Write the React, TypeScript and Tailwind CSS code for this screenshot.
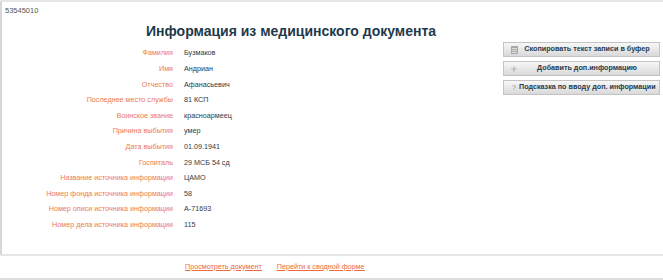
import { Plus } from 'lucide-react'

const ROWS: [string, string][] = [
  ['Фамилия', 'Бузмаков'],
  ['Имя', 'Андриан'],
  ['Отчество', 'Афанасьевич'],
  ['Последнее место службы', '81 КСП'],
  ['Воинское звание', 'красноармеец'],
  ['Причина выбытия', 'умер'],
  ['Дата выбытия', '01.09.1941'],
  ['Госпиталь', '29 МСБ 54 сд'],
  ['Название источника информации', 'ЦАМО'],
  ['Номер фонда источника информации', '58'],
  ['Номер описи источника информации', 'А-71693'],
  ['Номер дела источника информации', '115'],
]

function ActionButton({ icon, label }: { icon: React.ReactNode; label: string }) {
  return (
    <button
      type="button"
      className="flex h-[15px] w-[157px] items-center border border-[#c4c4c4] bg-gradient-to-b from-[#f7f7f7] to-[#d9d9d9] pl-[5px] pr-1 text-[7.2px] font-bold text-[#1f3b4d]"
    >
      <span className="flex w-[10px] shrink-0 items-center justify-center text-[#9a9a9a]">{icon}</span>
      <span className="flex-1 whitespace-nowrap text-center">{label}</span>
    </button>
  )
}

export default function App() {
  return (
    <div className="h-[280px] w-[663px] overflow-hidden border-t-2 border-[#e4e6e6] bg-white font-['Liberation_Sans_Narrow','Arial_Narrow',sans-serif]">
      <div className="h-[252px] border-l-2 border-[#d6d6de]">
        <div className="pl-[3px] pt-[4px] text-[7.5px] leading-[10px] text-[#555]">53545010</div>
        <h1 className="ml-[144px] mt-[7px] text-[14px] font-bold leading-[17px] text-[#1d3a4c]">
          Информация из медицинского документа
        </h1>
        <div className="mt-[2px] flex">
          <div className="flex w-[501px] flex-col pt-[4px]">
            {ROWS.map(([label, value]) => (
              <div key={label} className="flex h-[15.6px] items-center text-[7.2px]">
                <span className="w-[171px] shrink-0 text-right text-[#ec7a55]">{label}</span>
                <span className="ml-[11px] text-[#2e3a44]">{value}</span>
              </div>
            ))}
          </div>
          <div className="flex flex-col gap-[4px]">
            <ActionButton
              icon={
                <svg width="7" height="8" viewBox="0 0 7 8">
                  <rect x="0" y="0" width="7" height="8" fill="#a8a8a8" />
                  <rect x="1" y="2" width="5" height="1" fill="#e0e0e0" />
                  <rect x="1" y="4" width="5" height="1" fill="#e0e0e0" />
                  <rect x="1" y="6" width="5" height="1" fill="#e0e0e0" />
                </svg>
              }
              label="Скопировать текст записи в буфер"
            />
            <ActionButton icon={<Plus size={8} strokeWidth={2} />} label="Добавить доп.информацию" />
            <ActionButton icon={<span className="text-[8px] font-normal">?</span>} label="Подсказка по вводу доп. информации" />
          </div>
        </div>
      </div>
      <div className="h-[26px] border-y-2 border-[#e4e6e6] border-b-[#dcdcdc]">
        <div className="flex h-full items-center gap-[15px] pl-[185px] text-[7.2px] text-[#ec6a3c] underline">
          <a href="#">Просмотреть документ</a>
          <a href="#">Перейти к сводной форме</a>
        </div>
      </div>
    </div>
  )
}
